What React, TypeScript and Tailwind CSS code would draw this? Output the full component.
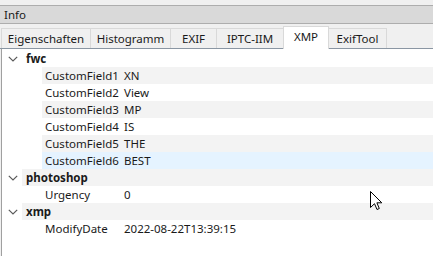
import React from "react";

type Row =
  | { kind: "group"; label: string }
  | { kind: "item"; k: string; v: string; hover?: boolean };

const rows: Row[] = [
  { kind: "group", label: "fwc" },
  { kind: "item", k: "CustomField1", v: "XN" },
  { kind: "item", k: "CustomField2", v: "View" },
  { kind: "item", k: "CustomField3", v: "MP" },
  { kind: "item", k: "CustomField4", v: "IS" },
  { kind: "item", k: "CustomField5", v: "THE" },
  { kind: "item", k: "CustomField6", v: "BEST", hover: true },
  { kind: "group", label: "photoshop" },
  { kind: "item", k: "Urgency", v: "0" },
  { kind: "group", label: "xmp" },
  { kind: "item", k: "ModifyDate", v: "2022-08-22T13:39:15" },
];

const tabs = [
  { label: "Eigenschaften", w: 90 },
  { label: "Histogramm", w: 81 },
  { label: "EXIF", w: 47 },
  { label: "IPTC-IIM", w: 68 },
  { label: "XMP", w: 46, active: true },
  { label: "ExifTool", w: 59 },
];

function Chevron() {
  return (
    <svg width="10" height="6" viewBox="0 0 10 6" className="block">
      <path d="M0.8 0.8 L5 5 L9.2 0.8" fill="none" stroke="#5a5a5a" strokeWidth="1.2" />
    </svg>
  );
}

export default function App() {
  return (
    <div className="relative w-[433px] h-[256px] overflow-hidden bg-[#f0f0f0] text-[11.5px] leading-none text-[#1a1a1a] font-['Noto_Sans',sans-serif]">
      <div className="h-[5px]" />
      <div className="h-[19px] bg-[#d9d9d9] border-y border-[#adadad] flex items-center pl-[4px]">
        Info
      </div>
      <div className="h-[24px] flex items-end pl-px">
        {tabs.map((t) =>
          t.active ? (
            <div
              key={t.label}
              style={{ width: t.w }}
              className="h-[23px] -mb-px -ml-px z-10 bg-white border border-b-0 border-[#d9d9d9] flex items-center justify-center pb-[3px]"
            >
              {t.label}
            </div>
          ) : (
            <div
              key={t.label}
              style={{ width: t.w }}
              className="h-[20px] bg-[#f0f0f0] border border-b-0 border-[#d9d9d9] -ml-px first:ml-0 flex items-center justify-center"
            >
              {t.label}
            </div>
          )
        )}
      </div>
      <div className="border-t border-[#8a96a3] h-[208px] pl-px">
        <div className="h-full bg-white border-l border-[#a0a0a0] pt-px">
          {rows.map((r, i) => {
            const bg = r.kind === "item" && r.hover ? "bg-[#e5f3ff]" : i % 2 === 1 ? "bg-[#f3f3f3]" : "bg-white";
            if (r.kind === "group") {
              return (
                <div key={i} className="h-[17px] flex">
                  <div className="w-[20px] flex items-center pl-[6px]">
                    <Chevron />
                  </div>
                  <div className={`flex-1 flex items-center pl-[4px] font-bold ${bg}`}>{r.label}</div>
                </div>
              );
            }
            return (
              <div key={i} className="h-[17px] flex">
                <div className="w-[40px]" />
                <div className={`flex-1 flex items-center ${bg}`}>
                  <div className="w-[82px] pl-[3px]">{r.k}</div>
                  <div>{r.v}</div>
                </div>
              </div>
            );
          })}
        </div>
      </div>
      <svg
        className="absolute left-[370px] top-[191px]"
        width="13"
        height="21"
        viewBox="0 0 13 21"
      >
        <path
          d="M0.5 0.5 V16.5 L4.5 12.7 L7 18.5 L9.3 17.5 L6.9 11.8 H11.8 Z"
          fill="#ffffff"
          stroke="#000000"
          strokeWidth="1"
          strokeLinejoin="miter"
        />
      </svg>
    </div>
  );
}
